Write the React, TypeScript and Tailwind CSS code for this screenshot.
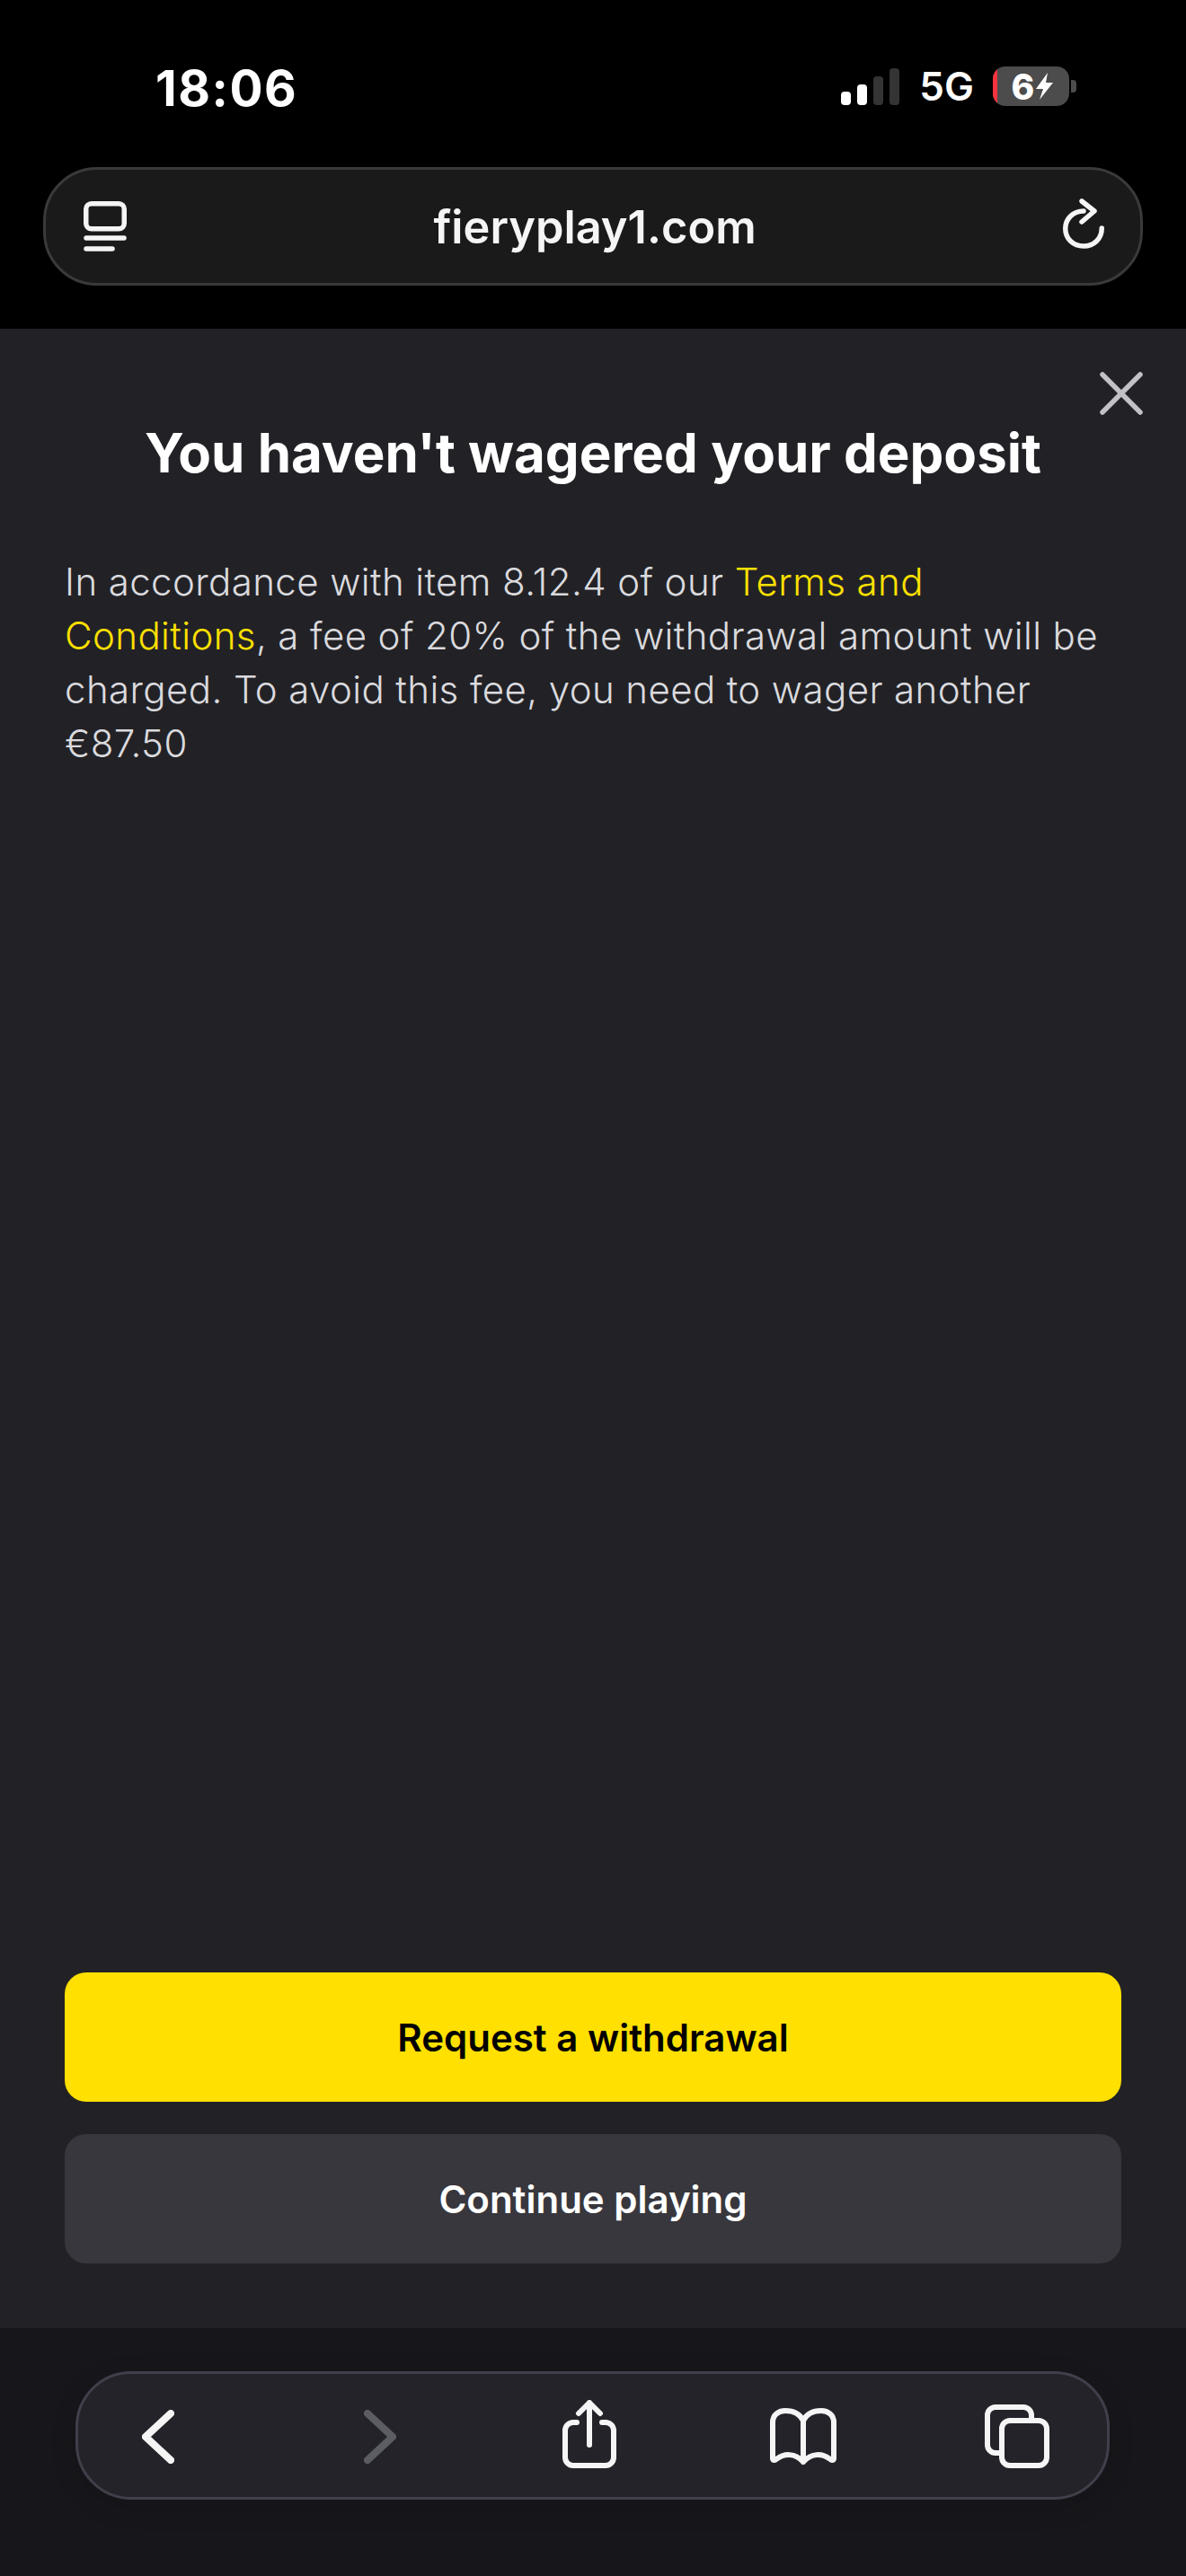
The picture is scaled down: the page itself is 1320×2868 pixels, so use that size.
const INTER = "font-['Inter',sans-serif]";

function SignalBars() {
  return (
    <div className="flex items-end gap-[7px] h-[41px]">
      <span className="w-[11px] h-[15px] rounded-[4px] bg-white" />
      <span className="w-[11px] h-[23px] rounded-[4px] bg-white" />
      <span className="w-[11px] h-[32px] rounded-[4px] bg-[#343434]" />
      <span className="w-[11px] h-[41px] rounded-[4px] bg-[#343434]" />
    </div>
  );
}

function Battery() {
  return (
    <div className="flex items-center gap-[2px]">
      <div className="relative w-[85px] h-[44px] rounded-[14px] bg-[#4c4c4c] overflow-hidden flex items-center justify-center">
        <span className="absolute left-0 top-0 bottom-0 w-[5px] bg-[#f5333f]" />
        <span className="text-white font-extrabold text-[39px] leading-none ml-[-18px]">6</span>
        <svg className="absolute left-[47px] top-[7px]" width="21" height="30" viewBox="0 0 21 30" fill="#fff">
          <path d="M14 0 1 18h8L5 30 20 11h-8z" />
        </svg>
      </div>
      <span className="w-[6px] h-[14px] rounded-r-[4px] bg-[#4c4c4c]" />
    </div>
  );
}

function TabsListIcon() {
  return (
    <svg width="48" height="56" viewBox="0 0 48 56" fill="none" stroke="#f5f5f5" strokeWidth="5.5" strokeLinecap="round">
      <rect x="2.750" y="2.750" width="42.500" height="28" rx="6" />
      <path d="M3 41h42M3 53h29" />
    </svg>
  );
}

function ReloadIcon() {
  return (
    <svg className="mt-[-7px]" width="46" height="56" viewBox="0 0 46 56" fill="none" stroke="#f5f5f5" strokeWidth="5.5" strokeLinecap="round" strokeLinejoin="round">
      <path d="M23 14C11 14 2.750 23 2.750 33.500C2.750 45 11.500 53 23 53C34.500 53 43.250 45 43.250 33" />
      <path d="M21 3l14 11-14 12" />
    </svg>
  );
}

function BackIcon({ flip, color }: { flip?: boolean; color: string }) {
  return (
    <svg width="36" height="60" viewBox="0 0 36 60" fill="none" stroke={color} strokeWidth="8" strokeLinecap="round" strokeLinejoin="round">
      <path d={flip ? "M4 4l28 26L4 56" : "M32 4L4 30l28 26"} />
    </svg>
  );
}

function ShareIcon() {
  return (
    <svg width="60" height="76" viewBox="0 0 60 76" fill="none" stroke="#f5f5f5" strokeWidth="6" strokeLinecap="round" strokeLinejoin="round">
      <path d="M16 25h-4a9 9 0 0 0-9 9v30a9 9 0 0 0 9 9h36a9 9 0 0 0 9-9V34a9 9 0 0 0-9-9h-4" />
      <path d="M30 50V3M18 15L30 3l12 12" />
    </svg>
  );
}

function BookIcon() {
  return (
    <svg width="74" height="64" viewBox="0 0 74 64" fill="none" stroke="#f5f5f5" strokeWidth="6" strokeLinecap="round" strokeLinejoin="round">
      <path d="M37 14C33 6 26 3 17 3C9 3 3 8 3 16V56C3 58 5 59 7 57C16 50 28 50 37 60C46 50 58 50 67 57C69 59 71 58 71 56V16C71 8 65 3 57 3C48 3 41 6 37 14V60" />
    </svg>
  );
}

function TabsIcon() {
  return (
    <svg width="72" height="71" viewBox="0 0 72 71" fill="none" stroke="#f5f5f5" strokeWidth="6" strokeLinejoin="round">
      <path d="M16 54h-4a9 9 0 0 1-9-9V12a9 9 0 0 1 9-9h31a9 9 0 0 1 9 9v4" />
      <rect x="19" y="18" width="50" height="50" rx="9" />
    </svg>
  );
}

export default function App() {
  return (
    <div className={`${INTER} w-[1320px] h-[2868px] bg-black flex flex-col overflow-hidden`}>
      {/* Status bar + address bar */}
      <header className="h-[366px] shrink-0 bg-black px-[48px]">
        <div className="h-[186px] relative">
          <span className="absolute left-[125px] top-[66px] text-white font-bold text-[55px] leading-[64px] tracking-[1.5px]">18:06</span>
          <div className="absolute right-[74px] top-[74px] flex items-center">
            <SignalBars />
            <span className="ml-[22px] mr-[21px] text-white font-semibold text-[44px] leading-[44px]">5G</span>
            <Battery />
          </div>
        </div>
        <div className="h-[132px] rounded-[60px] bg-[#1a1a1a] border-[3px] border-[#3a3a3a] flex items-center justify-between pl-[42px] pr-[40px]">
          <TabsListIcon />
          <span className="mt-[2px] text-[#f5f5f5] font-semibold text-[50.500px] leading-none">fieryplay1.com</span>
          <ReloadIcon />
        </div>
      </header>

      {/* Modal */}
      <main className="relative flex-1 bg-[#222226] px-[72px] pb-[72px] flex flex-col">
        <button className="absolute right-[48px] top-[48px] w-[48px] h-[48px]">
          <svg width="48" height="48" viewBox="0 0 48 48" fill="none" stroke="#c2c2c6" strokeWidth="5.5" strokeLinecap="round">
            <path d="M3 3l42 42M45 3L3 45" />
          </svg>
        </button>
        <h1 className="mt-[104px] text-center text-white font-bold text-[60px] leading-[68px]">You haven't wagered your deposit</h1>
        <p className="mt-[80px] text-[#dadade] font-light text-[42px] leading-[60px] tracking-[0.4px]">
          In accordance with item 8.12.4 of our <span className="text-[#ffe000]">Terms and Conditions</span>, a fee of 20% of the withdrawal amount will be charged. To avoid this fee, you need to wager another €87.50
        </p>
        <div className="mt-auto flex flex-col gap-[36px]">
          <button className="h-[144px] rounded-[24px] bg-[#ffe000] text-black font-semibold text-[42px]">Request a withdrawal</button>
          <button className="h-[144px] rounded-[24px] bg-[#38373d] text-white font-semibold text-[42px]">Continue playing</button>
        </div>
      </main>

      {/* Safari toolbar */}
      <footer className="h-[276px] shrink-0 bg-[#17171b] px-[84px] pt-[48px]">
        <div className="relative h-[143px] w-[1151px] rounded-[62px] bg-[#232329] border-[3px] border-[#40404c] shadow-[0_8px_30px_rgba(0,0,0,0.12)]">
          <span className="absolute left-[71px] top-[40px]"><BackIcon color="#f5f5f5" /></span>
          <span className="absolute left-[318px] top-[40px]"><BackIcon flip color="#5c5d62" /></span>
          <span className="absolute left-[539px] top-[29px]"><ShareIcon /></span>
          <span className="absolute left-[770px] top-[38px]"><BookIcon /></span>
          <span className="absolute left-[1009px] top-[34px]"><TabsIcon /></span>
        </div>
      </footer>
    </div>
  );
}
